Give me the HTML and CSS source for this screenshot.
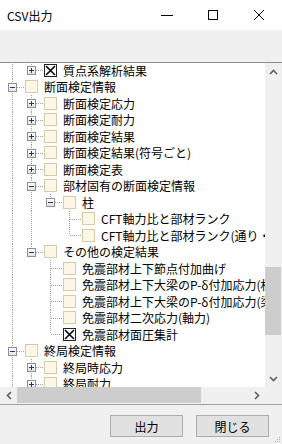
FILE: index.html
```html
<!DOCTYPE html>
<html lang="ja">
<head>
    <meta charset="UTF-8">
    <meta name="viewport" content="width=device-width, initial-scale=1.0">
    <title>CSV出力</title>
    <link rel="stylesheet" href="styles.css">
</head>
<body>

    <div class="titlebar">
        <span class="title">CSV出力</span>
        <span class="ctl"><svg width="12" height="12"><line x1="0" y1="6.5" x2="12" y2="6.5" stroke="#000"/></svg></span>
        <span class="ctl"><svg width="12" height="12"><rect x="1.5" y="1.5" width="9" height="9" fill="none" stroke="#000"/></svg></span>
        <span class="ctl"><svg width="12" height="12"><path d="M1 1 L11 11 M11 1 L1 11" stroke="#000" stroke-width="1"/></svg></span>
    </div>

    <div class="toolbar"></div>

    <div class="treebox">
        <div class="tree">
            <!-- niveau 2 : dernier enfant du noeud precedent -->
            <div class="row">
                <span class="ind pipe"></span>
                <span class="ind node last"><i class="exp plus"></i></span>
                <span class="cb on"></span><span class="label">質点系解析結果</span>
            </div>
            <div class="row">
                <span class="ind node"><i class="exp"></i></span>
                <span class="cb"></span><span class="label">断面検定情報</span>
            </div>
            <div class="row">
                <span class="ind pipe"></span>
                <span class="ind node"><i class="exp plus"></i></span>
                <span class="cb"></span><span class="label">断面検定応力</span>
            </div>
            <div class="row">
                <span class="ind pipe"></span>
                <span class="ind node"><i class="exp plus"></i></span>
                <span class="cb"></span><span class="label">断面検定耐力</span>
            </div>
            <div class="row">
                <span class="ind pipe"></span>
                <span class="ind node"><i class="exp plus"></i></span>
                <span class="cb"></span><span class="label">断面検定結果</span>
            </div>
            <div class="row">
                <span class="ind pipe"></span>
                <span class="ind node"><i class="exp plus"></i></span>
                <span class="cb"></span><span class="label">断面検定結果(符号ごと)</span>
            </div>
            <div class="row">
                <span class="ind pipe"></span>
                <span class="ind node"><i class="exp plus"></i></span>
                <span class="cb"></span><span class="label">断面検定表</span>
            </div>
            <div class="row">
                <span class="ind pipe"></span>
                <span class="ind node"><i class="exp"></i></span>
                <span class="cb"></span><span class="label">部材固有の断面検定情報</span>
            </div>
            <div class="row">
                <span class="ind pipe"></span>
                <span class="ind pipe"></span>
                <span class="ind node last"><i class="exp"></i></span>
                <span class="cb"></span><span class="label">柱</span>
            </div>
            <div class="row">
                <span class="ind pipe"></span>
                <span class="ind pipe"></span>
                <span class="ind"></span>
                <span class="ind node"></span>
                <span class="cb"></span><span class="label">CFT軸力比と部材ランク</span>
            </div>
            <div class="row">
                <span class="ind pipe"></span>
                <span class="ind pipe"></span>
                <span class="ind"></span>
                <span class="ind node last"></span>
                <span class="cb"></span><span class="label">CFT軸力比と部材ランク(通り・符号ごと)</span>
            </div>
            <div class="row">
                <span class="ind pipe"></span>
                <span class="ind node last"><i class="exp"></i></span>
                <span class="cb"></span><span class="label">その他の検定結果</span>
            </div>
            <div class="row">
                <span class="ind pipe"></span>
                <span class="ind"></span>
                <span class="ind node"></span>
                <span class="cb"></span><span class="label">免震部材上下節点付加曲げ</span>
            </div>
            <div class="row">
                <span class="ind pipe"></span>
                <span class="ind"></span>
                <span class="ind node"></span>
                <span class="cb"></span><span class="label">免震部材上下大梁のP-δ付加応力(柱)</span>
            </div>
            <div class="row">
                <span class="ind pipe"></span>
                <span class="ind"></span>
                <span class="ind node"></span>
                <span class="cb"></span><span class="label">免震部材上下大梁のP-δ付加応力(梁)</span>
            </div>
            <div class="row">
                <span class="ind pipe"></span>
                <span class="ind"></span>
                <span class="ind node"></span>
                <span class="cb"></span><span class="label">免震部材二次応力(軸力)</span>
            </div>
            <div class="row">
                <span class="ind pipe"></span>
                <span class="ind"></span>
                <span class="ind node last"></span>
                <span class="cb on"></span><span class="label">免震部材面圧集計</span>
            </div>
            <div class="row">
                <span class="ind node"><i class="exp"></i></span>
                <span class="cb"></span><span class="label">終局検定情報</span>
            </div>
            <div class="row">
                <span class="ind pipe"></span>
                <span class="ind node"><i class="exp plus"></i></span>
                <span class="cb"></span><span class="label">終局時応力</span>
            </div>
            <div class="row">
                <span class="ind pipe"></span>
                <span class="ind node"><i class="exp plus"></i></span>
                <span class="cb"></span><span class="label">終局耐力</span>
            </div>
        </div>

        <div class="vscroll">
            <span class="arrow"><svg width="9" height="6"><polyline points="1,5 4.5,1.5 8,5" fill="none" stroke="#606060" stroke-width="1.6"/></svg></span>
            <span class="vthumb"></span>
            <span class="arrow down"><svg width="9" height="6"><polyline points="1,1 4.5,4.5 8,1" fill="none" stroke="#606060" stroke-width="1.6"/></svg></span>
        </div>
    </div>

    <div class="hscroll">
        <span class="arrow"><svg width="6" height="9"><polyline points="5,1 1.5,4.5 5,8" fill="none" stroke="#606060" stroke-width="1.6"/></svg></span>
        <span class="hthumb"></span>
        <span class="arrow right"><svg width="6" height="9"><polyline points="1,1 4.5,4.5 1,8" fill="none" stroke="#606060" stroke-width="1.6"/></svg></span>
        <span class="corner"></span>
    </div>

    <div class="footer">
        <button class="btn">出力</button>
        <button class="btn">閉じる</button>
        <svg class="grip" width="6" height="6">
            <rect x="4" y="0" width="1" height="1" fill="#b8b8b8"/>
            <rect x="2" y="2" width="1" height="1" fill="#b8b8b8"/>
            <rect x="4" y="2" width="1" height="1" fill="#b8b8b8"/>
            <rect x="0" y="4" width="1" height="1" fill="#b8b8b8"/>
            <rect x="2" y="4" width="1" height="1" fill="#b8b8b8"/>
            <rect x="4" y="4" width="1" height="1" fill="#b8b8b8"/>
        </svg>
    </div>

</body>
</html>
```

FILE: styles.css
```css
* {
    box-sizing: border-box;
}
body {
    margin: 0;
    width: 282px;
    height: 444px;
    overflow: hidden;
    font-family: "Noto Sans CJK JP", sans-serif;
    font-size: 12px;
    color: #000;
    background-color: #f0f0f0;
}

/* barre de titre */
.titlebar {
    height: 30px;
    background-color: #fff;
    display: flex;
    align-items: center;
    padding-left: 7px;
}
.title {
    flex: 1;
}
.ctl {
    width: 46px;
    height: 30px;
    display: flex;
    align-items: center;
    justify-content: center;
}
.toolbar {
    height: 33px;
    border-bottom: 1px solid #8c8c8c;
}

/* arbre */
.treebox {
    height: 324px;
    display: flex;
    background-color: #fff;
}
.tree {
    flex: 1;
    overflow: hidden;
    padding-left: 3px;
    margin-top: -1px;
}
.row {
    height: 16.5px;
    display: flex;
    align-items: center;
    white-space: nowrap;
}
.ind {
    width: 19px;
    height: 100%;
    flex: none;
    position: relative;
}
.pipe::before,
.node::before {
    content: "";
    position: absolute;
    left: 9px;
    top: 0;
    bottom: 0;
    width: 1px;
    background-image: linear-gradient(to bottom, #a0a0a0 50%, transparent 50%);
    background-size: 1px 2px;
}
.node.last::before {
    bottom: 50%;
}
.node::after {
    content: "";
    position: absolute;
    left: 10px;
    right: -3px;
    top: 8px;
    height: 1px;
    background-image: linear-gradient(to right, #a0a0a0 50%, transparent 50%);
    background-size: 2px 1px;
}
.exp {
    position: absolute;
    left: 5px;
    top: 4px;
    width: 9px;
    height: 9px;
    border: 1px solid #8e8f8f;
    background: linear-gradient(#fff, #e3e3e3);
    z-index: 1;
}
.exp::before {
    content: "";
    position: absolute;
    left: 1px;
    top: 3px;
    width: 5px;
    height: 1px;
    background-color: #1f358a;
}
.exp.plus::after {
    content: "";
    position: absolute;
    left: 3px;
    top: 1px;
    width: 1px;
    height: 5px;
    background-color: #1f358a;
}
.cb {
    width: 13px;
    height: 13px;
    flex: none;
    margin-left: 3px;
    border: 1px solid #d8caa8;
    background-color: #fdf7e7;
}
.cb.on {
    border-color: #222;
    background: #fff url("data:image/svg+xml;utf8,<svg xmlns='http://www.w3.org/2000/svg' width='11' height='11'><path d='M1 1 L10 10 M10 1 L1 10' stroke='black' stroke-width='1.6'/></svg>") no-repeat center;
}
.label {
    margin-left: 6px;
}

/* barres de defilement */
.vscroll {
    width: 17px;
    flex: none;
    display: flex;
    flex-direction: column;
    background-color: #f0f0f0;
}
.arrow {
    width: 17px;
    height: 17px;
    flex: none;
    display: flex;
    align-items: center;
    justify-content: center;
}
.vthumb {
    height: 68px;
    margin-top: 187px;
    margin-right: 1px;
    background-color: #cdcdcd;
}
.arrow.down {
    margin-top: auto;
}
.hscroll {
    height: 17px;
    display: flex;
    background-color: #f0f0f0;
}
.hthumb {
    width: 184px;
    margin-bottom: 1px;
    background-color: #cdcdcd;
}
.arrow.right {
    margin-left: auto;
}
.corner {
    width: 17px;
    flex: none;
}

/* boutons */
.footer {
    height: 40px;
    border-top: 1px solid #a0a0a0;
    display: flex;
    justify-content: flex-end;
    gap: 13px;
    padding: 10px 13px 0 0;
    position: relative;
}
.btn {
    width: 73px;
    height: 22px;
    padding: 0;
    font-family: "Noto Sans CJK JP", sans-serif;
    font-size: 12px;
    color: #000;
    background-color: #e1e1e1;
    border: 1px solid #adadad;
}
.grip {
    position: absolute;
    right: 1px;
    bottom: 1px;
}
```
